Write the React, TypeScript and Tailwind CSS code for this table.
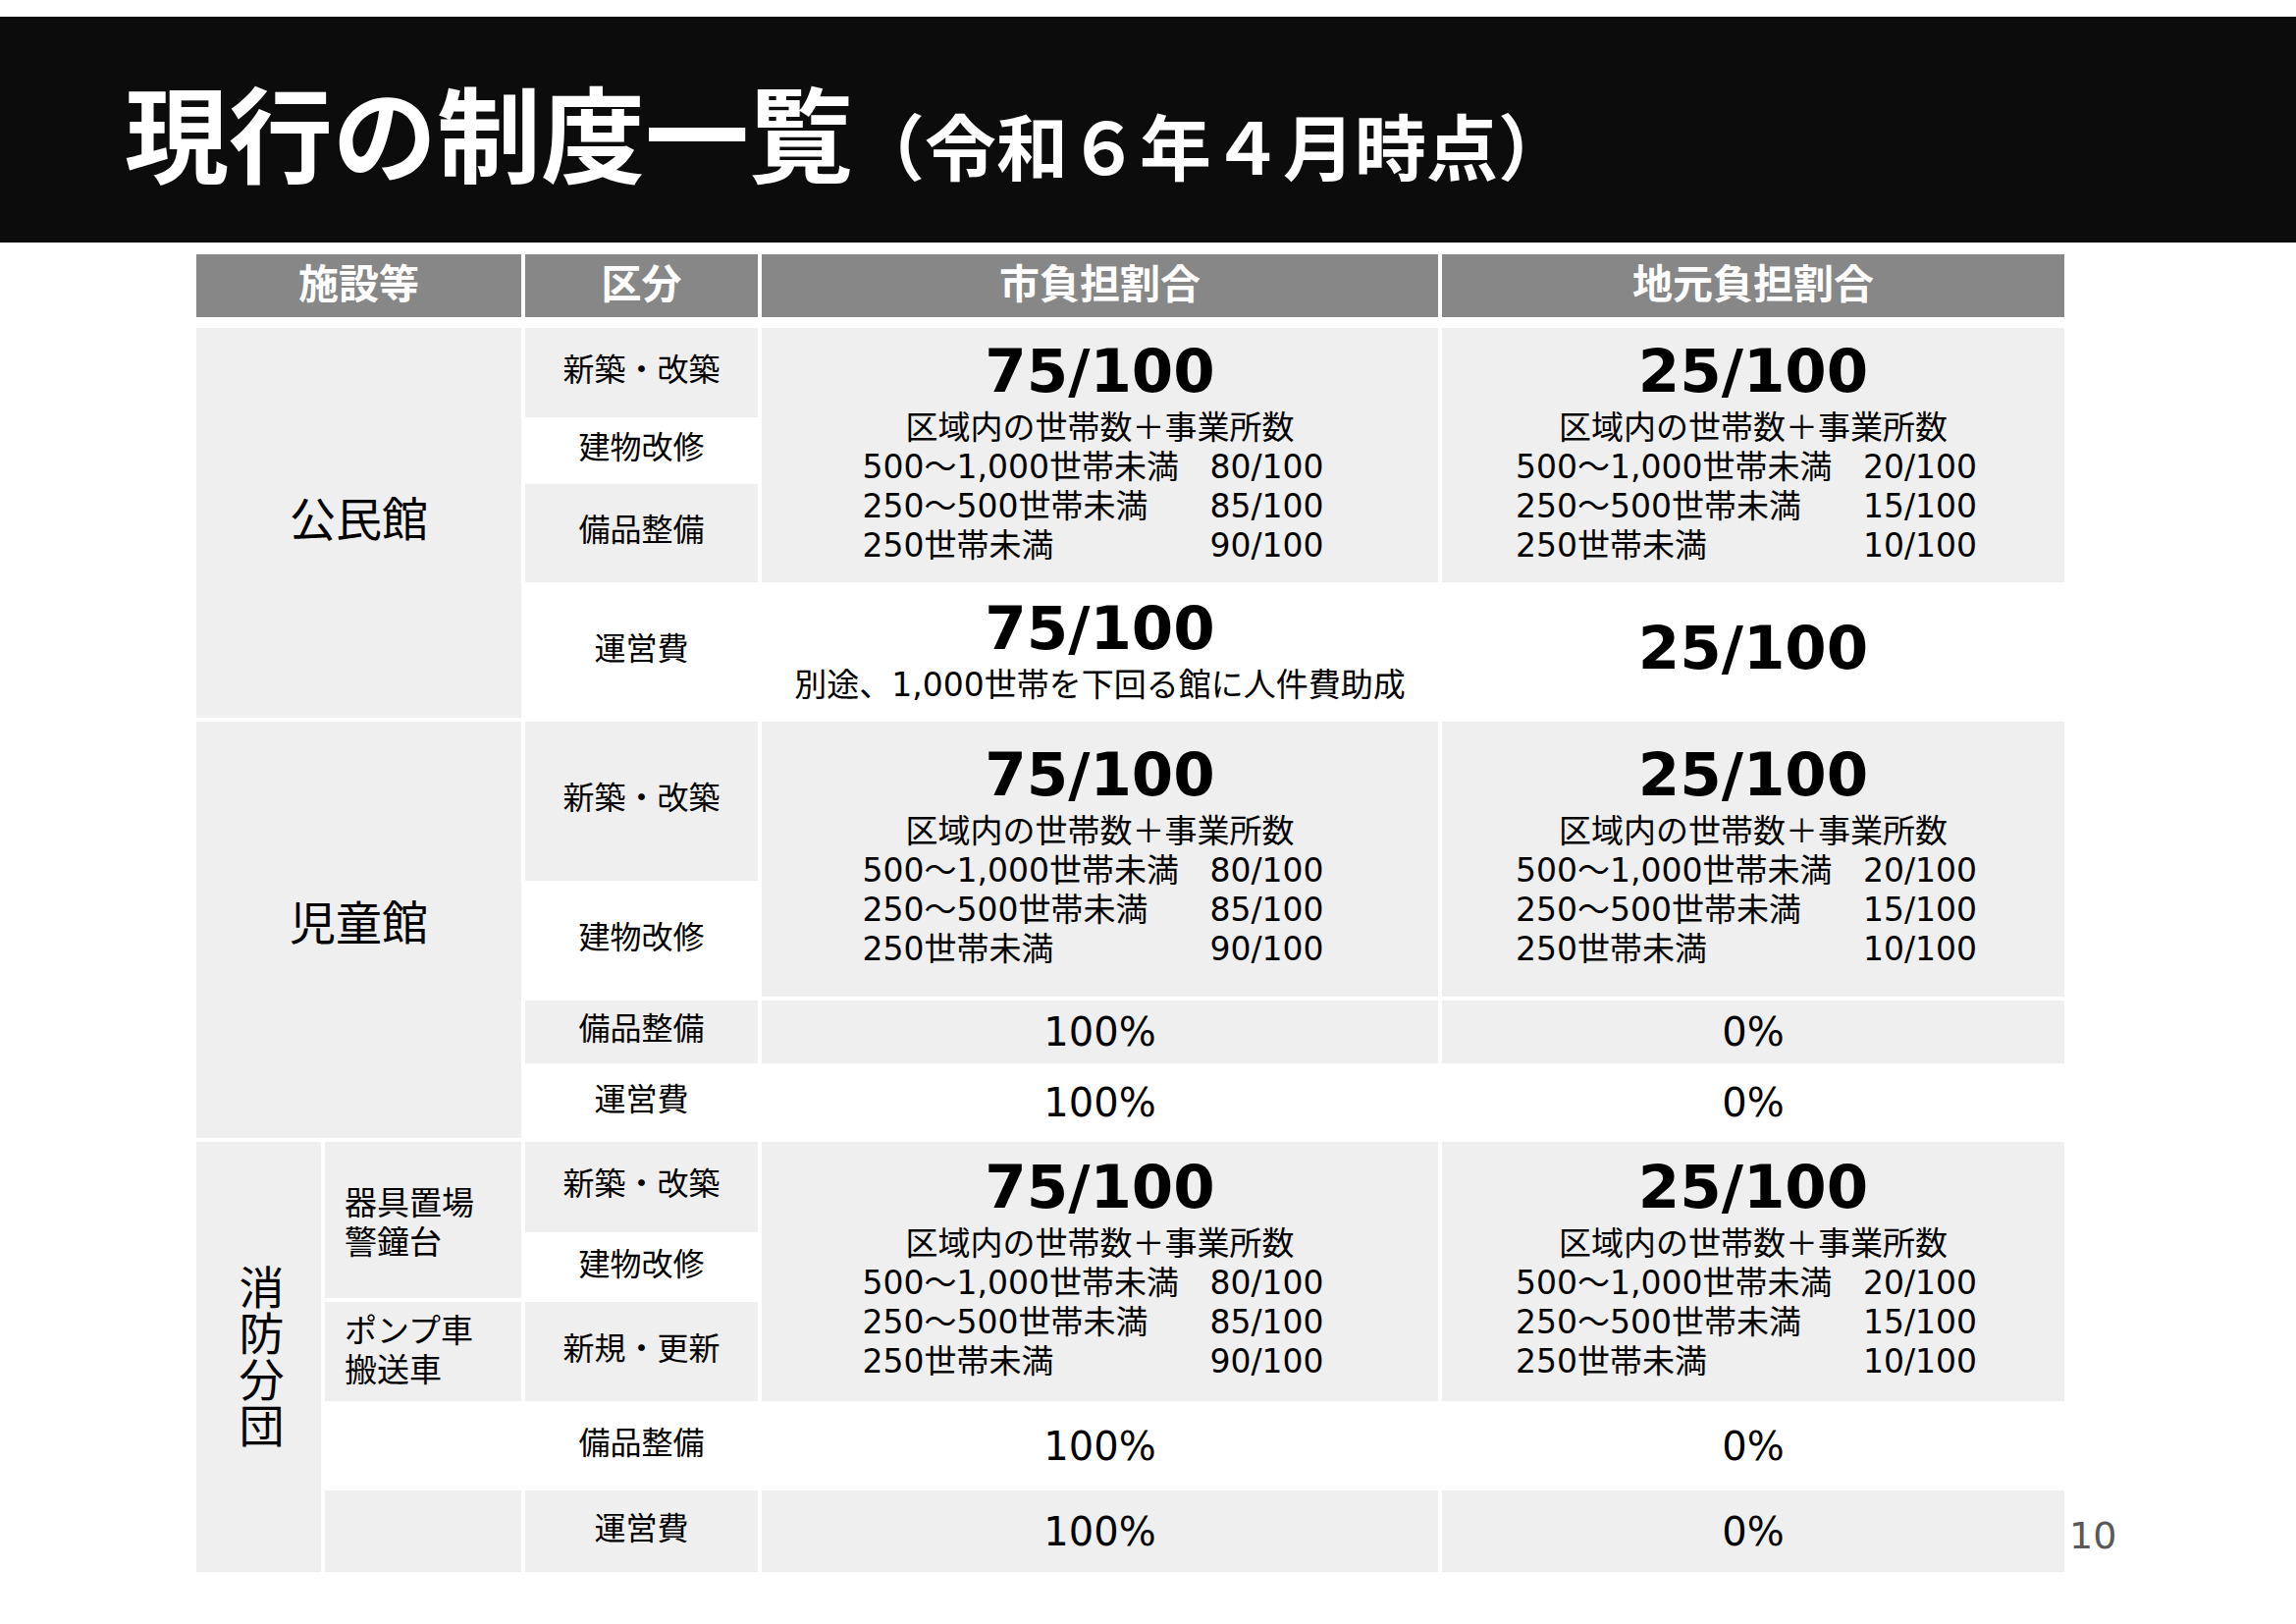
import React from "react";

const jp = "font-['Noto_Sans_CJK_JP',sans-serif]";
const mix = "font-['DejaVu_Sans','Noto_Sans_CJK_JP',sans-serif]";

const cityLines = [
  ["500～1,000世帯未満", "80/100"],
  ["250～500世帯未満", "85/100"],
  ["250世帯未満", "90/100"],
];
const localLines = [
  ["500～1,000世帯未満", "20/100"],
  ["250～500世帯未満", "15/100"],
  ["250世帯未満", "10/100"],
];

function Ratio({ value, lines }: { value: string; lines: string[][] }) {
  return (
    <div className="flex flex-col items-center pb-3">
      <div className={`${mix} text-[61px] font-bold leading-[76px] text-black`}>{value}</div>
      <div className={`${mix} text-[33px] leading-[40px] text-black`}>区域内の世帯数＋事業所数</div>
      <div className="mr-[14px] w-[470px]">
        {lines.map(([label, v]) => (
          <div key={label} className={`${mix} flex justify-between text-[33px] leading-[40px] text-black`}>
            <span>{label}</span>
            <span>{v}</span>
          </div>
        ))}
      </div>
    </div>
  );
}

function Label({ children, className = "" }: { children: React.ReactNode; className?: string }) {
  return (
    <div className={`flex items-center justify-center pb-3 ${jp} text-[32px] text-black ${className}`}>
      {children}
    </div>
  );
}

function Pct({ children, className = "" }: { children: React.ReactNode; className?: string }) {
  return (
    <div className={`flex items-center justify-center ${mix} text-[40px] text-black ${className}`}>
      {children}
    </div>
  );
}

export default function App() {
  return (
    <div className="relative h-[1654px] w-[2339px] overflow-hidden bg-white">
      <div className="mt-[17px] h-[230px] bg-[#0c0c0c] pl-[127px] pt-[62px]">
        <div className={`flex items-baseline ${jp} font-bold leading-none text-white`}>
          <span className="text-[106px]">現行の制度一覧</span>
          <span className="text-[73px]">（令和６年４月時点）</span>
        </div>
      </div>

      <div className="ml-[200px] mt-[12px] flex items-end">
        <div className="w-[1903px]">
          {/* header */}
          <div className={`grid grid-cols-[331px_237px_689px_634px] gap-[4px] ${jp} text-[41px] font-bold text-white`}>
            {["施設等", "区分", "市負担割合", "地元負担割合"].map((h) => (
              <div key={h} className="flex h-[64px] items-center justify-center bg-[#878787] pb-2">
                {h}
              </div>
            ))}
          </div>

          {/* body */}
          <div className="mt-[11px] grid grid-cols-[127px_200px_237px_689px_634px] grid-rows-[91px_60px_100px_134px_162px_114px_64px_72px_92px_63px_101px_83px_83px] gap-[4px]">
            {/* 公民館 */}
            <div className={`col-span-2 col-start-1 row-span-4 row-start-1 flex items-center justify-center bg-[#efefef] pb-3 ${jp} text-[47px] text-black`}>
              公民館
            </div>
            <Label className="col-start-3 row-start-1 bg-[#efefef]">新築・改築</Label>
            <Label className="col-start-3 row-start-2 bg-white">建物改修</Label>
            <Label className="col-start-3 row-start-3 bg-[#efefef]">備品整備</Label>
            <div className="col-start-4 row-span-3 row-start-1 flex items-center justify-center bg-[#efefef]">
              <Ratio value="75/100" lines={cityLines} />
            </div>
            <div className="col-start-5 row-span-3 row-start-1 flex items-center justify-center bg-[#efefef]">
              <Ratio value="25/100" lines={localLines} />
            </div>
            <Label className="col-start-3 row-start-4 bg-white">運営費</Label>
            <div className="col-start-4 row-start-4 flex flex-col items-center justify-center bg-white pb-2">
              <div className={`${mix} text-[61px] font-bold leading-[76px] text-black`}>75/100</div>
              <div className={`${mix} text-[33px] leading-[40px] text-black`}>別途、1,000世帯を下回る館に人件費助成</div>
            </div>
            <div className={`col-start-5 row-start-4 flex items-center justify-center bg-white pb-2 ${mix} text-[61px] font-bold text-black`}>
              25/100
            </div>

            {/* 児童館 */}
            <div className={`col-span-2 col-start-1 row-span-4 row-start-5 flex items-center justify-center bg-[#efefef] pb-5 ${jp} text-[47px] text-black`}>
              児童館
            </div>
            <Label className="col-start-3 row-start-5 bg-[#efefef]">新築・改築</Label>
            <Label className="col-start-3 row-start-6 bg-white">建物改修</Label>
            <div className="col-start-4 row-span-2 row-start-5 flex items-center justify-center bg-[#efefef]">
              <Ratio value="75/100" lines={cityLines} />
            </div>
            <div className="col-start-5 row-span-2 row-start-5 flex items-center justify-center bg-[#efefef]">
              <Ratio value="25/100" lines={localLines} />
            </div>
            <Label className="col-start-3 row-start-7 bg-[#efefef]">備品整備</Label>
            <Pct className="col-start-4 row-start-7 bg-[#efefef]">100%</Pct>
            <Pct className="col-start-5 row-start-7 bg-[#efefef]">0%</Pct>
            <Label className="col-start-3 row-start-8 bg-white">運営費</Label>
            <Pct className="col-start-4 row-start-8 bg-white">100%</Pct>
            <Pct className="col-start-5 row-start-8 bg-white">0%</Pct>

            {/* 消防分団 */}
            <div className="col-start-1 row-span-5 row-start-9 flex items-center justify-center bg-[#efefef] pl-[6px]">
              <span className={`${jp} text-[46px] leading-none tracking-[1px] text-black [writing-mode:vertical-rl]`}>
                消防分団
              </span>
            </div>
            <div className="col-start-2 row-span-2 row-start-9 flex items-center bg-[#efefef] pl-[20px]">
              <span className={`${jp} whitespace-pre-line text-[33px] leading-[40px] text-black`}>
                {"器具置場\n警鐘台"}
              </span>
            </div>
            <div className="col-start-2 row-start-11 flex items-center bg-[#efefef] pb-2 pl-[20px]">
              <span className={`${jp} whitespace-pre-line text-[33px] leading-[40px] text-black`}>
                {"ポンプ車\n搬送車"}
              </span>
            </div>
            <Label className="col-start-3 row-start-9 bg-[#efefef]">新築・改築</Label>
            <Label className="col-start-3 row-start-10 bg-white">建物改修</Label>
            <Label className="col-start-3 row-start-11 bg-[#efefef]">新規・更新</Label>
            <div className="col-start-4 row-span-3 row-start-9 flex items-center justify-center bg-[#efefef]">
              <Ratio value="75/100" lines={cityLines} />
            </div>
            <div className="col-start-5 row-span-3 row-start-9 flex items-center justify-center bg-[#efefef]">
              <Ratio value="25/100" lines={localLines} />
            </div>
            <div className="col-start-2 row-start-12 bg-white" />
            <Label className="col-start-3 row-start-12 bg-white">備品整備</Label>
            <Pct className="col-start-4 row-start-12 bg-white">100%</Pct>
            <Pct className="col-start-5 row-start-12 bg-white">0%</Pct>
            <div className="col-start-2 row-start-13 bg-[#efefef]" />
            <Label className="col-start-3 row-start-13 bg-[#efefef]">運営費</Label>
            <Pct className="col-start-4 row-start-13 bg-[#efefef]">100%</Pct>
            <Pct className="col-start-5 row-start-13 bg-[#efefef]">0%</Pct>
          </div>
        </div>

        <div className={`mb-[18px] ml-[5px] ${mix} text-[38px] leading-none text-[#595959]`}>10</div>
      </div>
    </div>
  );
}
